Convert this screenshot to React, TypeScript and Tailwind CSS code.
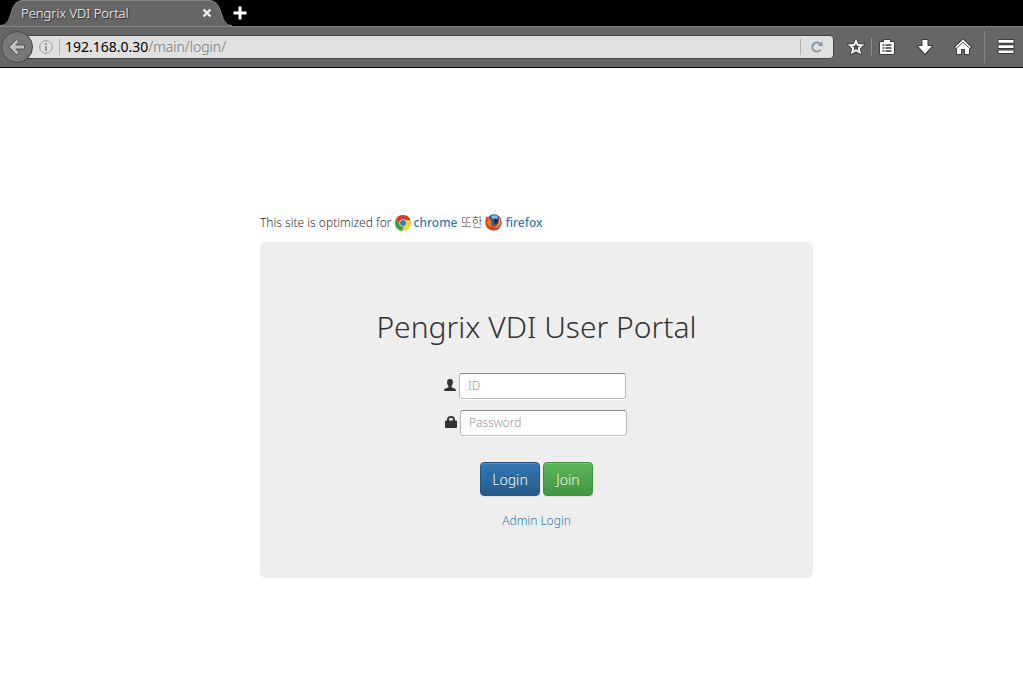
import type { ReactNode } from 'react';

function ChromeLogo() {
  return (
    <svg viewBox="0 0 16 16" className="h-4 w-4 shrink-0" aria-hidden="true">
      <circle cx="8" cy="8" r="8" fill="#f7d82f" />
      <path d="M1.1 4A8 8 0 0 0 6.6 15.9L9.8 10.2 5.3 9.6Z" fill="#35a24a" />
      <path d="M1.1 4A8 8 0 0 1 15.5 5.2H8L5 9.3Z" fill="#d93a2b" />
      <circle cx="8" cy="8" r="3.7" fill="#dfe6e8" />
      <circle cx="8" cy="8" r="3" fill="#4a7f9f" />
    </svg>
  );
}

function FirefoxLogo() {
  return (
    <svg viewBox="0 0 17 17" className="h-[17px] w-[17px] shrink-0" aria-hidden="true">
      <circle cx="9" cy="7.5" r="7.2" fill="#26609f" />
      <path d="M6 2.2C8 .8 12 .8 13.4 3.6L10.5 5.4 7.4 4.6Z" fill="#7fb9dd" />
      <path d="M9 4.6 13 5.5 12.5 9 9.5 10Z" fill="#10294f" />
      <path
        d="M1.7 2.3 3.5 4 6.2 4.3 5.5 6.3 8.2 7.1 6.5 8.6 7.3 10.7C9.5 12.2 12.8 10.8 13.1 7.5L14 4.5 13.3 2.2C18 5.5 17.4 12 13.6 14.9 9.8 18 3.5 16.7 1.2 12.3-.2 9.3.1 5 1.7 2.3Z"
        fill="#c9481b"
      />
      <path d="M13.8 3.5C17.2 8 14.5 13.7 9.5 14.2 12.8 12.5 14.7 9 13.8 3.5Z" fill="#f6b432" />
      <path d="M2.7 5.2 5.2 5.1 4.8 6.8 6.8 7.6 5.4 9.2 5.9 11.5 8.5 13 4.5 12.4 2.2 9Z" fill="#ee7d22" />
    </svg>
  );
}

function ToolButton({ label, children }: { label: string; children: ReactNode }) {
  return (
    <button type="button" aria-label={label} className="flex h-7 w-[38px] shrink-0 items-center justify-center">
      <svg
        viewBox="0 0 18 18"
        className="h-[18px] w-[18px] overflow-visible"
        fill="#fff"
        stroke="#3b3b3f"
        strokeWidth="2"
        strokeLinejoin="round"
        paintOrder="stroke"
      >
        {children}
      </svg>
    </button>
  );
}

function TabBar() {
  return (
    <div className="flex h-[26px] bg-black">
      <div className="relative flex w-[232px] shrink-0 items-center pr-5 pl-[21px]">
        <svg className="absolute inset-0 h-full w-full" viewBox="0 0 232 27" preserveAspectRatio="none" aria-hidden="true">
          <path d="M0 27C8 26 9 20 11 14 13 6 16 0 24 0H208C216 0 219 6 221 13 223 20 225 27 232 27Z" fill="#666" />
          <path
            d="M0 26.5C8 26 9 20 11 14 13 6 16 .5 24 .5H208C216 .5 219 6 221 13 223 20 225 26.5 232 26.5"
            fill="none"
            stroke="#8a8a8a"
          />
        </svg>
        <span className="relative flex-1 text-[13px] leading-[26px] font-light text-white [text-shadow:1px_1px_1px_#222]">
          Pengrix VDI Portal
        </span>
        <button type="button" aria-label="Close tab" className="relative">
          <svg viewBox="0 0 10 10" className="h-[10px] w-[10px]" stroke="#eee" strokeWidth="2.4">
            <path d="m1.5 1.5 7 7m0-7-7 7" />
          </svg>
        </button>
      </div>
      <button type="button" aria-label="New tab" className="flex w-4 items-center justify-center">
        <svg viewBox="0 0 14 14" className="h-[14px] w-[14px]" stroke="#fff" strokeWidth="3">
          <path d="M7 .5v13M.5 7h13" />
        </svg>
      </button>
    </div>
  );
}

function NavBar() {
  return (
    <div className="flex h-[42px] items-center border-t border-b border-t-[#858585] border-b-black bg-[#666] pl-px">
      <button
        type="button"
        aria-label="Back"
        className="z-10 flex h-8 w-8 shrink-0 items-center justify-center rounded-full border border-[#484848] bg-[#777]"
      >
        <svg viewBox="0 0 18 18" className="h-[18px] w-[18px]" fill="#c0c0c0" stroke="#555" strokeWidth="1">
          <path d="M8.5 1.2 11 3.5 7.8 7H16.5V11H7.8L11 14.5 8.5 16.8 1 9Z" />
        </svg>
      </button>
      <div className="-ml-2 flex h-6 min-w-0 flex-1 items-center rounded-r-sm border border-[#454545] bg-[#e0e0e0] pl-[13px]">
        <svg viewBox="0 0 14 14" className="h-[14px] w-[14px] shrink-0" fill="none" stroke="#999" aria-hidden="true">
          <circle cx="7" cy="7" r="6.3" />
          <path d="M7 6v5M7 3v2" strokeWidth="2" />
        </svg>
        <span className="ml-1.5 h-4 w-px bg-[#b4b4b4]" />
        <div className="ml-[5px] flex-1 truncate text-sm leading-[22px] font-light text-[#777]">
          <span className="font-normal text-black">192.168.0.30</span>/main/login/
        </div>
        <span className="h-4 w-px bg-[#b4b4b4]" />
        <button type="button" aria-label="Reload" className="flex w-8 items-center justify-center">
          <svg viewBox="0 0 12 12" className="h-3 w-3" fill="none" stroke="#8897a5" strokeWidth="1.9">
            <path d="M9.7 8.6A4.6 4.6 0 1 1 9 2.7" />
            <path d="M11.5 0V5H6.5Z" fill="#8897a5" stroke="none" />
          </svg>
        </button>
      </div>
      <div className="flex shrink-0 items-center pl-[3px]">
        <ToolButton label="Bookmark this page">
          <path d="m9 .8 2.4 5.2 5.8.6-4.3 3.8 1.3 5.9L9 13.3l-5.2 3 1.3-5.9L.8 6.6l5.8-.6Z" />
          <path d="m9 5.3 1.1 2.5 2.8.3-2.1 1.8.6 2.8L9 11.3l-2.4 1.4.6-2.8-2.1-1.8 2.8-.3Z" fill="#555" stroke="none" />
        </ToolButton>
        <span className="-ml-1 h-[18px] w-px bg-[#8c8c8c]" />
        <div className="-ml-1 flex">
          <ToolButton label="Bookmarks">
            <path d="M6 4V2h6v2h3q1 0 1 1v10q0 1-1 1H3q-1 0-1-1V5q0-1 1-1Z" />
            <path d="M4.5 7h2m1 0h6m-9 3h2m1 0h6m-9 3h2m1 0h6" strokeWidth="1.3" />
          </ToolButton>
          <ToolButton label="Downloads">
            <path d="M6.5 2h5v6H16l-7 7.8L2 8h4.5Z" />
          </ToolButton>
          <ToolButton label="Home">
            <path d="M9 1.5 17 9.2 15 10.5V16h-4v-5H7v5H3v-5.5L1 9.2Z" />
            <path d="M3 9.8 9 4.3l6 5.5" fill="none" stroke="#555" strokeWidth="1" />
          </ToolButton>
        </div>
        <span className="ml-0.5 h-8 w-px bg-[#858585]" />
        <div className="pl-0.5 -mr-0.5">
          <ToolButton label="Menu">
            <path d="M1.5 2h15v2.7h-15Zm0 5.2h15v2.7h-15Zm0 5.2h15v2.7h-15Z" />
          </ToolButton>
        </div>
      </div>
    </div>
  );
}

const inputClass =
  'h-[26px] w-[167px] rounded-[3px] border border-[#bbb] border-t-[#888] bg-white px-2 pb-0.5 text-xs font-light text-[#555] shadow-[0_1px_0_#fff] placeholder:text-[#999]';

function LoginForm() {
  return (
    <form
      onSubmit={(e) => e.preventDefault()}
      className="flex flex-col items-center rounded-md bg-[#eee] pt-[65px] pb-12"
    >
      <h1 className="text-3xl leading-10 font-light text-[#333]">Pengrix VDI User Portal</h1>
      <div className="mt-[26px] flex items-center gap-[3px] pr-[3px]">
        <label htmlFor="user-id" aria-label="ID" className="pb-0.5">
          <svg viewBox="0 0 12 12" className="h-3 w-3" fill="#333">
            <path d="M6 0C8 0 9 1.2 8.9 3.3 8.9 5 8.3 6.2 7.6 7v1.2L11 9.7q1 .5 1 2.3H0q0-1.8 1-2.3L4.4 8.2V7C3.7 6.2 3.1 5 3.1 3.3 3 1.2 4 0 6 0Z" />
          </svg>
        </label>
        <input id="user-id" type="text" placeholder="ID" className={inputClass} />
      </div>
      <div className="mt-[11px] flex items-center gap-[3px] pr-px">
        <label htmlFor="password" aria-label="Password" className="pb-0.5">
          <svg viewBox="0 0 12 12" className="h-3 w-3" fill="#333">
            <path
              d="M2 4.5V3.5C2 1 3.5 0 6 0s4 1 4 3.5v1h1q1 0 1 1V11q0 1-1 1H1q-1 0-1-1V5.5q0-1 1-1Zm2 0h4V3.4C8 2.3 7.4 2 6 2s-2 .3-2 1.4Z"
              fillRule="evenodd"
            />
          </svg>
        </label>
        <input id="password" type="password" placeholder="Password" className={inputClass} />
      </div>
      <div className="mt-[26px] flex gap-[3px] text-sm font-light text-white">
        <button
          type="submit"
          className="h-[34px] w-[60px] rounded border border-[#245580] bg-linear-to-b from-[#337ab7] to-[#265a88] pt-px shadow-[inset_0_1px_0_rgba(255,255,255,0.15),0_1px_1px_rgba(0,0,0,0.08)] [text-shadow:0_-1px_0_rgba(0,0,0,0.2)]"
        >
          Login
        </button>
        <button
          type="button"
          className="h-[34px] w-[50px] rounded border border-[#3e8f3e] bg-linear-to-b from-[#5cb85c] to-[#419641] pt-px shadow-[inset_0_1px_0_rgba(255,255,255,0.15),0_1px_1px_rgba(0,0,0,0.08)] [text-shadow:0_-1px_0_rgba(0,0,0,0.2)]"
        >
          Join
        </button>
      </div>
      <a href="#admin" className="mt-4 text-xs leading-[18px] font-light text-[#337ab7]">
        Admin Login
      </a>
    </form>
  );
}

export default function App() {
  return (
    <div className="min-h-screen bg-white font-['Noto_Sans','Noto_Sans_CJK_KR',sans-serif]">
      <header>
        <TabBar />
        <NavBar />
      </header>
      <main className="pt-[145px] pb-24 pl-[50px]">
        <div className="mx-auto max-w-[553px]">
          <p className="mb-2.5 flex h-[19px] items-center gap-[3px] text-xs font-light whitespace-nowrap text-[#333]">
            <span>This site is optimized for</span>
            <ChromeLogo />
            <a href="#chrome" className="font-medium text-[#337ab7]">
              chrome
            </a>
            <span>또한</span>
            <FirefoxLogo />
            <a href="#firefox" className="font-medium text-[#337ab7]">
              firefox
            </a>
          </p>
          <LoginForm />
        </div>
      </main>
    </div>
  );
}
